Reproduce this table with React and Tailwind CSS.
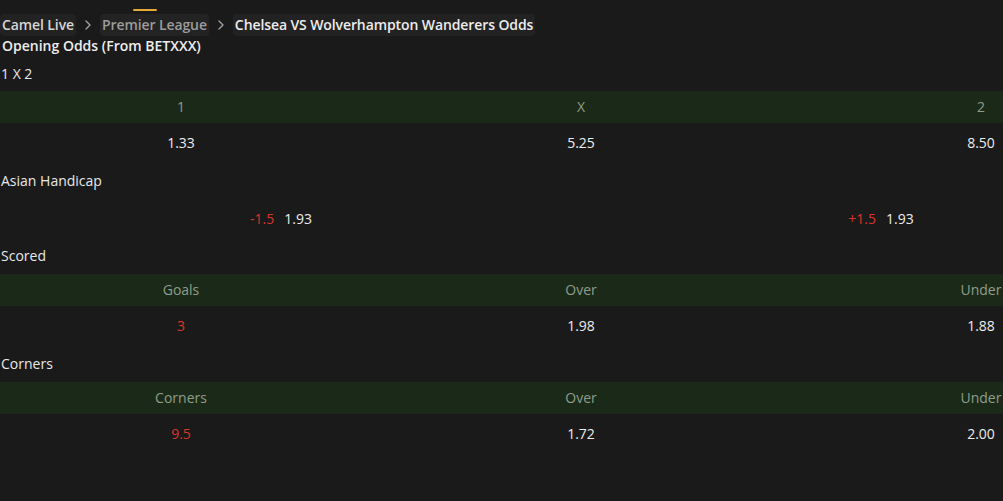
import { ChevronRight } from 'lucide-react';

const Section = ({ title, first, children }) => (
  <>
    <div className={`${first ? 'h-[35px]' : 'h-9'} flex items-center pl-px text-[#e8e8e8]`}>{title}</div>
    {children}
  </>
);

const HeaderRow = ({ cols }) => (
  <div className="-ml-[19px] w-[1200px] h-8 grid grid-cols-3 items-center bg-[#1b2a18] text-[#8e9d8a]">
    {cols.map((c, i) => (
      <div key={i} className="text-center">{c}</div>
    ))}
  </div>
);

const ValueRow = ({ cols }) => (
  <div className="-ml-[19px] w-[1200px] h-10 grid grid-cols-3 items-center">
    {cols.map((c, i) => (
      <div key={i} className={`text-center ${c.red ? 'text-[#d8352c]' : 'text-[#ececec]'}`}>
        {c.v}
      </div>
    ))}
  </div>
);

export default function App() {
  return (
    <div className="min-h-screen w-full overflow-hidden bg-[#1a1a1a] text-sm font-['Open_Sans',sans-serif]">
      {/* breadcrumb */}
      <div className="relative pt-[14px] flex items-center gap-[4px] font-semibold tracking-[-0.1px]">
        <span className="absolute left-[133px] top-[9px] h-[2px] w-6 bg-[#e6a93a] rounded-full" />
        <span className="h-[22px] px-0.5 rounded bg-[#222222] flex items-center text-[#d6d6d6]">Camel Live</span>
        <ChevronRight size={16} className="text-[#a0a0a0]" />
        <span className="h-[22px] px-0.5 rounded bg-[#232323] flex items-center text-[#9c9c9c]">Premier League</span>
        <ChevronRight size={16} className="text-[#a0a0a0]" />
        <span className="h-[22px] px-0.5 rounded bg-[#222222] flex items-center text-[#ededed]">
          Chelsea VS Wolverhampton Wanderers Odds
        </span>
      </div>
      <div className="h-[20px] leading-[20px] pl-0.5 font-semibold text-[#ededed]">Opening Odds (From BETXXX)</div>

      <Section title="1 X 2" first>
        <HeaderRow cols={['1', 'X', '2']} />
        <ValueRow cols={[{ v: '1.33' }, { v: '5.25' }, { v: '8.50' }]} />
      </Section>

      <Section title="Asian Handicap">
        <div className="-ml-[19px] w-[1200px] h-[39px] grid grid-cols-2 items-center">
          <div className="flex justify-center gap-2.5">
            <span className="text-[#d8352c]">-1.5</span>
            <span className="text-[#ececec]">1.93</span>
          </div>
          <div className="flex justify-center gap-2.5">
            <span className="text-[#d8352c]">+1.5</span>
            <span className="text-[#ececec]">1.93</span>
          </div>
        </div>
      </Section>

      <Section title="Scored">
        <HeaderRow cols={['Goals', 'Over', 'Under']} />
        <ValueRow cols={[{ v: '3', red: true }, { v: '1.98' }, { v: '1.88' }]} />
      </Section>

      <Section title="Corners">
        <HeaderRow cols={['Corners', 'Over', 'Under']} />
        <ValueRow cols={[{ v: '9.5', red: true }, { v: '1.72' }, { v: '2.00' }]} />
      </Section>
    </div>
  );
}
